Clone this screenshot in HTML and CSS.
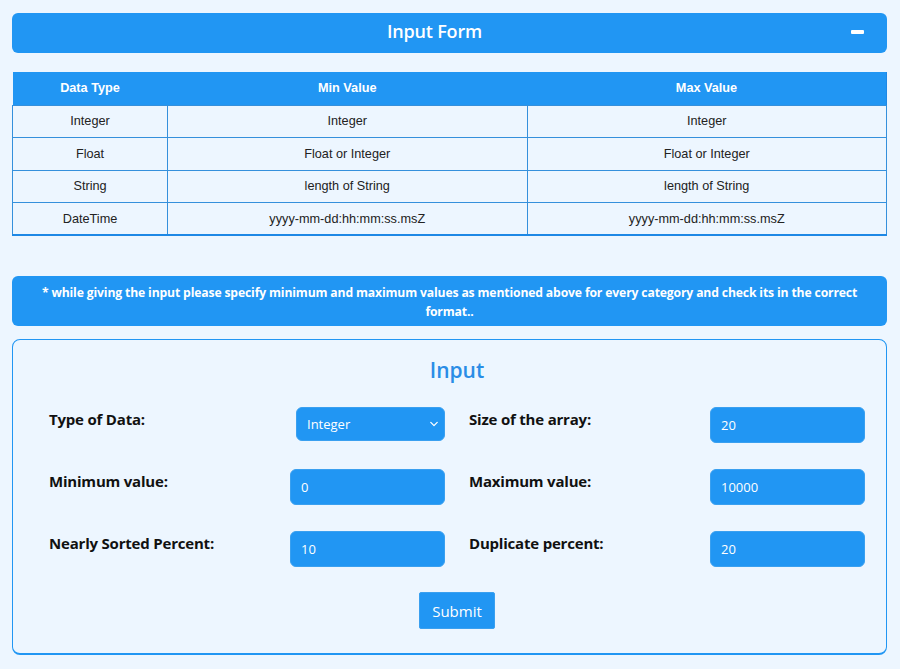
FILE: index.html
```html
<!DOCTYPE html>
<html>
<head>
<meta charset="utf-8">
<link rel="stylesheet" href="styles.css">
</head>
<body>
<div class="page">
  <div class="header-bar">
    <span class="header-title">Input Form</span>
    <span class="minus"></span>
  </div>

  <table class="types">
    <thead>
      <tr><th class="c1">Data Type</th><th>Min Value</th><th>Max Value</th></tr>
    </thead>
    <tbody>
      <tr><td>Integer</td><td>Integer</td><td>Integer</td></tr>
      <tr><td>Float</td><td>Float or Integer</td><td>Float or Integer</td></tr>
      <tr><td>String</td><td>length of String</td><td>length of String</td></tr>
      <tr><td>DateTime</td><td>yyyy-mm-dd:hh:mm:ss.msZ</td><td>yyyy-mm-dd:hh:mm:ss.msZ</td></tr>
    </tbody>
  </table>

  <div class="note">* while giving the input please specify minimum and maximum values as mentioned above for every category and check its in the correct format..</div>

  <div class="card">
    <h2 class="card-title">Input</h2>
    <div class="grid">
      <div class="field">
        <label>Type of Data:</label>
        <div class="select">Integer
          <svg class="chev" viewBox="0 0 10 6" width="8" height="6"><path d="M1 1l4 4 4-4" fill="none" stroke="#fff" stroke-width="1.6" stroke-linecap="round" stroke-linejoin="round"/></svg>
        </div>
      </div>
      <div class="field">
        <label>Size of the array:</label>
        <div class="input">20</div>
      </div>
      <div class="field">
        <label>Minimum value:</label>
        <div class="input">0</div>
      </div>
      <div class="field">
        <label>Maximum value:</label>
        <div class="input">10000</div>
      </div>
      <div class="field">
        <label>Nearly Sorted Percent:</label>
        <div class="input">10</div>
      </div>
      <div class="field">
        <label>Duplicate percent:</label>
        <div class="input">20</div>
      </div>
    </div>
    <div class="actions"><button class="submit">Submit</button></div>
  </div>
</div>
</body>
</html>
```

FILE: styles.css
```css
* { box-sizing: border-box; }
html, body { margin: 0; padding: 0; background: #edf6ff; }
body { font-family: "Open Sans", "Noto Sans", sans-serif; color: #111; }
.page { padding: 13px 13px 0 12px; }

.header-bar {
  height: 40px;
  background: #2196f3;
  border-radius: 6px;
  display: flex;
  align-items: center;
  justify-content: center;
  position: relative;
  padding-right: 30px;
  padding-bottom: 4px;
}
.header-title { color: #fff; font-size: 18px; font-weight: 600; letter-spacing: -0.2px; }
.minus {
  position: absolute; right: 23px; top: 17px;
  width: 13px; height: 4px; background: #fff; border-radius: 1px;
}

.types {
  margin-top: 19px;
  width: 100%;
  border-collapse: collapse;
  font-family: "Liberation Sans", Arial, sans-serif;
  font-size: 12.7px;
  color: #222;
  border-bottom: 2px solid #1e88e5;
  border-right: 1px solid #1e88e5;
}
.types th {
  background: #2196f3; color: #fff; font-weight: bold;
  height: 33px; padding: 0;
}
.types th.c1 { width: 155px; }
.types td {
  height: 32.5px; text-align: center; padding: 0;
  border: 1px solid #3590dc;
}

.note {
  margin-top: 40px;
  background: #2196f3;
  color: #fff;
  border-radius: 6px;
  font-weight: 700;
  font-size: 12.2px;
  line-height: 19px;
  text-align: center;
  padding: 7px 24px 5px;
  letter-spacing: -0.15px;
}

.card {
  margin-top: 13px;
  border: 1.5px solid #2196f3;
  border-bottom-width: 2px;
  border-radius: 8px;
  padding: 15px 21px 24px 36px;
  height: 316px;
}
.card-title {
  margin: 0; text-align: center;
  color: #2a8de6; font-weight: 600; font-size: 21px; line-height: 30px;
}
.grid {
  margin-top: 22px;
  display: grid;
  grid-template-columns: 1fr 1fr;
  column-gap: 24px;
  row-gap: 26px;
}
.field { display: flex; justify-content: space-between; align-items: flex-start; height: 36px; }
.field label { font-weight: 700; font-size: 15px; margin-top: 2px; letter-spacing: -0.2px; }
.input, .select {
  width: 155px; height: 36px;
  background: #2196f3; color: #fff;
  border-radius: 6px;
  font-size: 13px;
  display: flex; align-items: center;
  padding-left: 10px;
  border: 1px solid #3aa0f0;
}
.select { width: 149px; height: 34px; justify-content: space-between; padding-right: 6px; }
.actions { display: flex; justify-content: center; margin-top: 25px; }
.submit {
  background: #2196f3; color: #fff; border: 1px solid #3aa0f0;
  font-family: inherit; font-size: 15px;
  width: 76px; height: 37px; border-radius: 2px;
}
```
